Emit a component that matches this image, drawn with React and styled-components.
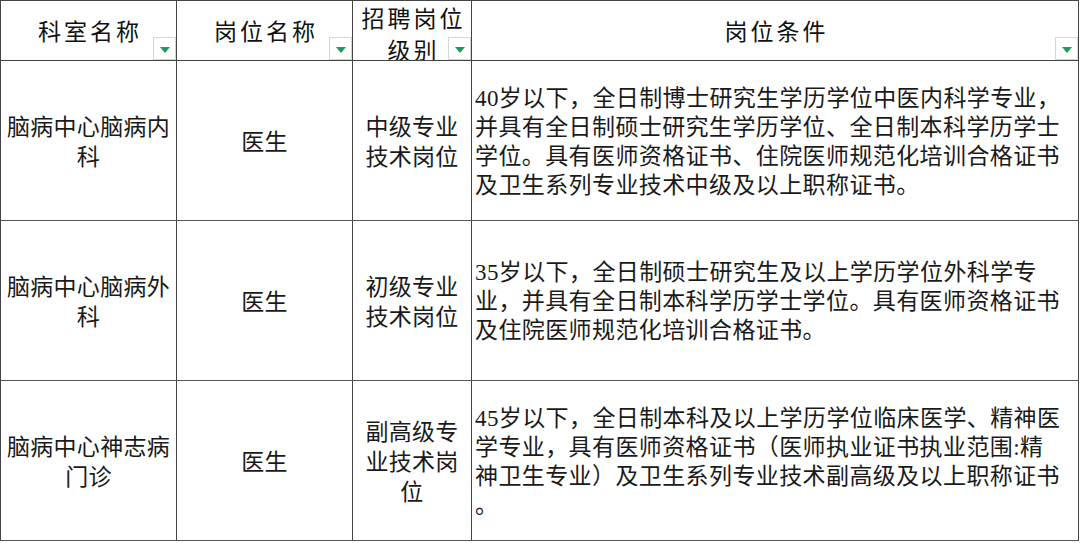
import React from 'react';
import styled, { createGlobalStyle } from 'styled-components';

const headers = [
  { label: '科室名称', wrap: false },
  { label: '岗位名称', wrap: false },
  { label: '招聘岗位级别', wrap: true },
  { label: '岗位条件', wrap: false },
];

const rows = [
  {
    dept: '脑病中心脑病内科',
    post: '医生',
    level: '中级专业技术岗位',
    terms: [
      '40岁以下，全日制博士研究生学历学位中医内科学专业，',
      '并具有全日制硕士研究生学历学位、全日制本科学历学士',
      '学位。具有医师资格证书、住院医师规范化培训合格证书',
      '及卫生系列专业技术中级及以上职称证书。',
    ],
  },
  {
    dept: '脑病中心脑病外科',
    post: '医生',
    level: '初级专业技术岗位',
    terms: [
      '35岁以下，全日制硕士研究生及以上学历学位外科学专',
      '业，并具有全日制本科学历学士学位。具有医师资格证书',
      '及住院医师规范化培训合格证书。',
    ],
  },
  {
    dept: '脑病中心神志病门诊',
    post: '医生',
    level: '副高级专业技术岗位',
    terms: [
      '45岁以下，全日制本科及以上学历学位临床医学、精神医',
      '学专业，具有医师资格证书（医师执业证书执业范围:精',
      '神卫生专业）及卫生系列专业技术副高级及以上职称证书',
      '。',
    ],
  },
];

export default function App() {
  return (
    <>
      <GlobalStyle />
      <Sheet>
        {headers.map((h) => (
          <HeadCell key={h.label} wrap={h.wrap ? 1 : 0}>
            <HeadText>{h.label}</HeadText>
            <FilterButton aria-label="筛选">
              <Arrow />
            </FilterButton>
          </HeadCell>
        ))}
        {rows.map((r) => (
          <React.Fragment key={r.dept}>
            <Cell>
              <CenterText>{r.dept}</CenterText>
            </Cell>
            <Cell>
              <CenterText>{r.post}</CenterText>
            </Cell>
            <Cell narrow>
              <CenterText>{r.level}</CenterText>
            </Cell>
            <Cell left>
              <Terms>
                {r.terms.map((line, i) => (
                  <TermLine key={i}>{line}</TermLine>
                ))}
              </Terms>
            </Cell>
          </React.Fragment>
        ))}
      </Sheet>
    </>
  );
}

const GlobalStyle = createGlobalStyle`
  html, body {
    margin: 0;
    padding: 0;
    background: #fff;
  }
  body {
    font-family: "Liberation Serif", "Noto Sans CJK SC", serif;
    color: #111;
  }
`;

const Sheet = styled.div`
  display: grid;
  grid-template-columns: 176px 176px 119px 607px;
  grid-template-rows: 60px 160px 160px 160px;
  width: 1079px;
  border-left: 1px solid #444;
  border-top: 1px solid #444;
  box-sizing: border-box;
`;

const HeadCell = styled.div`
  position: relative;
  display: flex;
  justify-content: center;
  align-items: ${(p) => (p.wrap ? 'flex-start' : 'center')};
  padding: ${(p) => (p.wrap ? '3px 0 0' : '4px 0 0')};
  border-right: 1px solid #444;
  border-bottom: 1px solid #444;
  box-sizing: border-box;
  overflow: hidden;
  text-align: center;
`;

const HeadText = styled.div`
  font-size: 23px;
  line-height: 32px;
  letter-spacing: 3px;
  padding-left: 3px;
`;

const FilterButton = styled.span`
  position: absolute;
  right: 0;
  bottom: 0;
  width: 23px;
  height: 23px;
  box-sizing: border-box;
  border: 1px solid #d6d6d6;
  background: #fff;
  display: flex;
  align-items: center;
  justify-content: center;
`;

const Arrow = styled.span`
  width: 0;
  height: 0;
  margin-top: 2px;
  border-left: 5px solid transparent;
  border-right: 5px solid transparent;
  border-top: 6px solid #1e9a5e;
`;

const Cell = styled.div`
  display: flex;
  align-items: center;
  justify-content: ${(p) => (p.left ? 'flex-start' : 'center')};
  padding: ${(p) => (p.narrow ? '0 8px' : p.left ? '0 0 0 3px' : '0')};
  border-right: 1px solid #444;
  border-bottom: 1px solid #555;
  box-sizing: border-box;
  overflow: hidden;
`;

const CenterText = styled.div`
  font-size: 23px;
  line-height: 30px;
  letter-spacing: 0.3px;
  text-align: center;
  color: #1a1a1a;
  padding-top: 4px;
`;

const Terms = styled.div`
  display: flex;
  flex-direction: column;
  font-size: 23px;
  line-height: 29px;
  letter-spacing: 0.4px;
  color: #1a1a1a;
  padding-top: 2px;
`;

const TermLine = styled.span`
  white-space: nowrap;
`;
